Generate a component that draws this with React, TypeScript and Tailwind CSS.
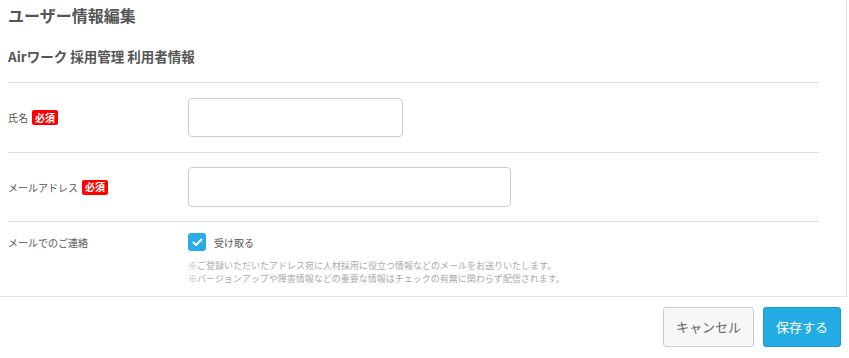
const Badge = () => (
  <span className="ml-[4px] inline-flex h-[15px] items-center rounded-[2px] bg-[#ff0000] px-[3px] text-[10px] font-bold leading-none text-white">
    必須
  </span>
);

export default function App() {
  return (
    <div
      className="h-[358px] w-[849px] bg-white text-[#555]"
      style={{ fontFamily: '"Noto Sans CJK JP", "Noto Sans", sans-serif' }}
    >
      <div className="h-[297px] w-[847px] border-r border-b border-[#e3e3e3] pl-2 pr-[27px]">
        <h1 className="h-[30px] text-[16px] font-bold leading-[30px] text-[#555]">ユーザー情報編集</h1>
        <h2 className="flex h-[53px] items-center border-b border-[#ddd] text-[13.5px] font-bold text-[#555]">
          Airワーク 採用管理 利用者情報
        </h2>

        <div className="flex h-[70px] items-center border-b border-[#ddd]">
          <div className="flex w-[180px] items-center text-[10px]">
            氏名
            <Badge />
          </div>
          <input className="h-[39px] w-[215px] rounded-[4px] border border-[#ccc] bg-white px-2 text-[12px] outline-none" />
        </div>

        <div className="flex h-[69px] items-center border-b border-[#ddd]">
          <div className="flex w-[180px] items-center text-[10px]">
            メールアドレス
            <Badge />
          </div>
          <input className="h-[40px] w-[323px] rounded-[4px] border border-[#ccc] bg-white px-2 text-[12px] outline-none" />
        </div>

        <div className="flex pt-[11px]">
          <div className="flex h-[18px] w-[180px] items-center text-[10px]">メールでのご連絡</div>
          <div>
            <label className="flex items-center">
              <span className="flex h-[18px] w-[18px] items-center justify-center rounded-[3px] bg-[#29ace4]">
                <svg width="11" height="9" viewBox="0 0 11 9" fill="none">
                  <path d="M1.5 4.5 L4.2 7 L9.5 1.5" stroke="white" strokeWidth="2" strokeLinecap="round" strokeLinejoin="round" />
                </svg>
              </span>
              <span className="ml-[8px] text-[10px]">受け取る</span>
            </label>
            <p className="mt-[8px] text-[9px] leading-[13px] text-[#aaa]">
              ※ご登録いただいたアドレス宛に人材採用に役立つ情報などのメールをお送りいたします。
              <br />
              ※バージョンアップや障害情報などの重要な情報はチェックの有無に関わらず配信されます。
            </p>
          </div>
        </div>
      </div>

      <div className="flex justify-end gap-[9px] pr-[8px] pt-[10px]">
        <button className="h-[40px] w-[91px] rounded-[3px] border border-[#ccc] bg-[#f7f7f7] text-[13px] text-[#666]">
          キャンセル
        </button>
        <button className="h-[40px] w-[78px] rounded-[3px] border border-[#1b98cc] bg-[#23ace3] text-[13px] text-white">
          保存する
        </button>
      </div>
    </div>
  );
}
